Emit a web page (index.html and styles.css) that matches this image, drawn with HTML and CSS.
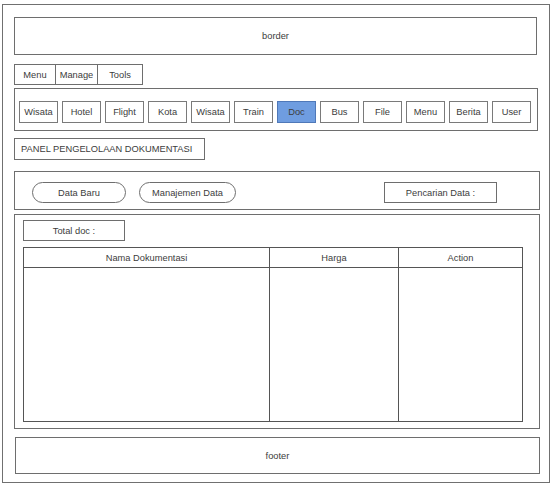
FILE: index.html
```html
<!DOCTYPE html>
<html>
<head>
<meta charset="utf-8">
<link rel="stylesheet" href="styles.css">
</head>
<body>
<div class="frame">
  <div class="header">border</div>
  <div class="tabs">
    <div class="tab t-menu">Menu</div>
    <div class="tab t-manage">Manage</div>
    <div class="tab t-tools">Tools</div>
  </div>
  <div class="nav">
    <div class="nbtn">Wisata</div>
    <div class="nbtn">Hotel</div>
    <div class="nbtn">Flight</div>
    <div class="nbtn">Kota</div>
    <div class="nbtn">Wisata</div>
    <div class="nbtn">Train</div>
    <div class="nbtn active">Doc</div>
    <div class="nbtn">Bus</div>
    <div class="nbtn">File</div>
    <div class="nbtn">Menu</div>
    <div class="nbtn">Berita</div>
    <div class="nbtn">User</div>
  </div>
  <div class="title">PANEL PENGELOLAAN DOKUMENTASI</div>
  <div class="actions">
    <div class="pill p-baru">Data Baru</div>
    <div class="pill p-manaj">Manajemen Data</div>
    <div class="search">Pencarian Data :</div>
  </div>
  <div class="tpanel">
    <div class="total">Total doc :</div>
    <div class="table">
      <div class="col c1"><div class="th">Nama Dokumentasi</div></div>
      <div class="col c2"><div class="th">Harga</div></div>
      <div class="col c3"><div class="th">Action</div></div>
    </div>
  </div>
  <div class="footer">footer</div>
</div>
</body>
</html>
```
FILE: styles.css
```css
* { box-sizing: border-box; }
html, body { margin: 0; padding: 0; background: #fff; }
body {
  font-family: "Liberation Sans", Arial, sans-serif;
  font-size: 9.3px;
  color: #3c3c3c;
  width: 552px;
  height: 494px;
}
.frame {
  margin: 4px 0 0 2px;
  width: 548px;
  height: 479px;
  border: 1px solid #707070;
  padding: 12px 0 0 11px;
  display: flex;
  flex-direction: column;
  align-items: flex-start;
}
.header {
  width: 523px;
  height: 38px;
  border: 1px solid #6e6e6e;
  display: flex;
  align-items: center;
  justify-content: center;
}
.tabs {
  display: flex;
  margin-top: 9px;
}
.tab {
  height: 21px;
  border: 1px solid #6e6e6e;
  display: flex;
  align-items: center;
  justify-content: center;
}
.tab + .tab { margin-left: -1px; }
.t-menu { width: 42px; }
.t-manage { width: 43px; }
.t-tools { width: 46px; }
.nav {
  margin-top: 3px;
  width: 524px;
  height: 43px;
  border: 1px solid #6e6e6e;
  padding: 12px 0 0 4px;
  display: flex;
  gap: 4px;
}
.nbtn {
  width: 39px;
  height: 22px;
  border: 1px solid #7a7a7a;
  display: flex;
  align-items: center;
  justify-content: center;
}
.nbtn.active {
  background: #6f9de0;
  border-color: #4f78b8;
}
.title {
  margin-top: 7px;
  width: 191px;
  height: 22px;
  border: 1px solid #6e6e6e;
  padding-left: 6px;
  display: flex;
  align-items: center;
}
.actions {
  margin-top: 11px;
  width: 526px;
  height: 39px;
  border: 1px solid #6e6e6e;
  padding: 10px 0 0 17px;
  display: flex;
  align-items: flex-start;
}
.pill {
  height: 21px;
  border: 1px solid #6e6e6e;
  border-radius: 11px;
  display: flex;
  align-items: center;
  justify-content: center;
}
.p-baru { width: 94px; }
.p-manaj { width: 97px; margin-left: 13px; }
.search {
  margin-left: 148px;
  width: 113px;
  height: 21px;
  border: 1px solid #6e6e6e;
  display: flex;
  align-items: center;
  justify-content: center;
}
.tpanel {
  margin-top: 4px;
  width: 526px;
  height: 215px;
  border: 1px solid #6e6e6e;
  padding: 5px 0 0 8px;
  display: flex;
  flex-direction: column;
  align-items: flex-start;
}
.total {
  width: 102px;
  height: 21px;
  border: 1px solid #6e6e6e;
  display: flex;
  align-items: center;
  justify-content: center;
}
.table {
  margin-top: 6px;
  width: 500px;
  height: 175px;
  border: 1px solid #555;
  display: flex;
}
.col { height: 100%; }
.c1 { width: 246px; border-right: 1px solid #555; }
.c2 { width: 129px; border-right: 1px solid #555; }
.c3 { flex: 1; }
.th {
  height: 20px;
  border-bottom: 1px solid #555;
  display: flex;
  align-items: center;
  justify-content: center;
}
.footer {
  margin-top: 8px;
  margin-left: 1px;
  width: 525px;
  height: 37px;
  border: 1px solid #6e6e6e;
  display: flex;
  align-items: center;
  justify-content: center;
}
```
